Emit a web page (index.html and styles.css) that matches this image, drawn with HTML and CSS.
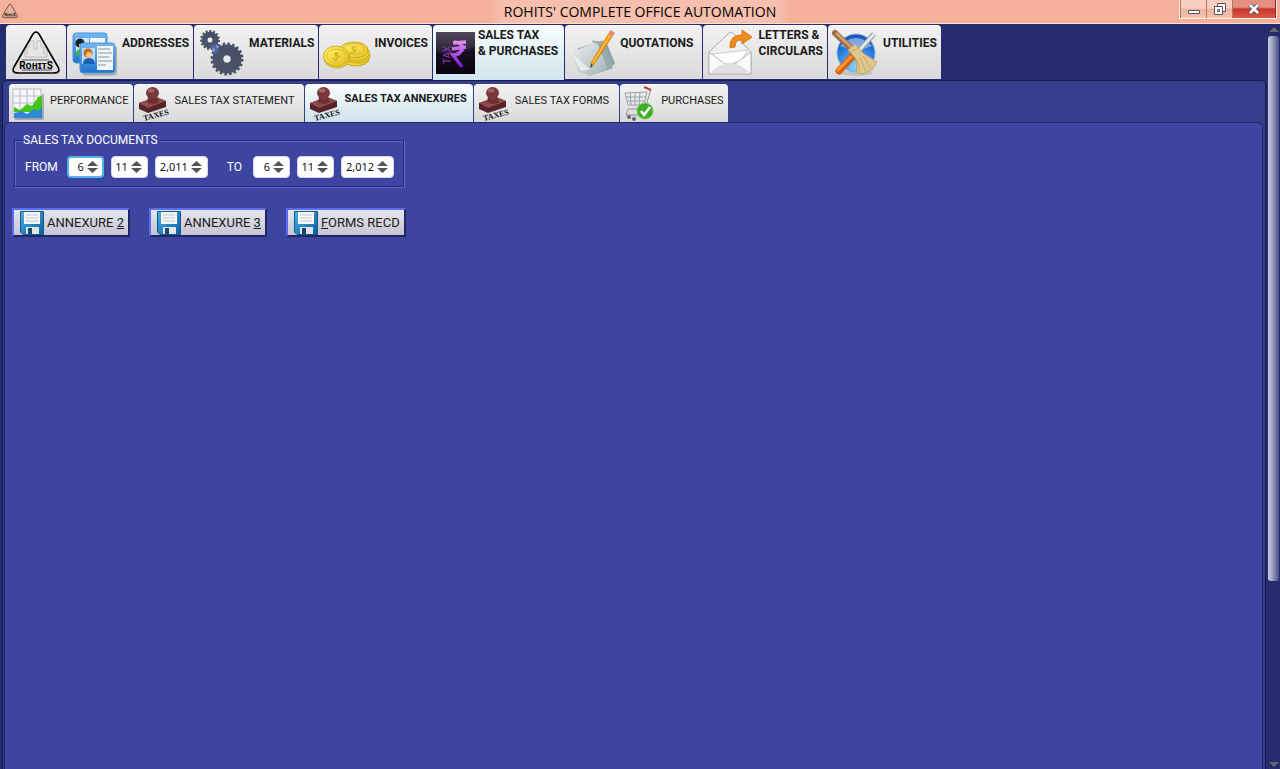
FILE: index.html
```html
<!DOCTYPE html>
<html lang="en">
<head>
<meta charset="utf-8">
<title>ROHITS' COMPLETE OFFICE AUTOMATION</title>
<link rel="stylesheet" href="styles.css">
</head>
<body>
<svg class="defs" aria-hidden="true">
  <defs>
    <linearGradient id="blue" x1="0" y1="0" x2="0" y2="1"><stop offset="0" stop-color="#75b8f3"/><stop offset="1" stop-color="#1f74cf"/></linearGradient>
    <linearGradient id="gold" x1="0" y1="0" x2="1" y2="1"><stop offset="0" stop-color="#fff06a"/><stop offset="1" stop-color="#e6c322"/></linearGradient>
    <linearGradient id="steel" x1="1" y1="0" x2="0" y2="1"><stop offset="0" stop-color="#475069"/><stop offset="1" stop-color="#4c5367"/></linearGradient>
    <linearGradient id="violet" x1="0" y1="0" x2="0" y2="1"><stop offset="0" stop-color="#e58af5"/><stop offset="1" stop-color="#7a10d8"/></linearGradient>
    <linearGradient id="night" x1="0" y1="0" x2="0" y2="1"><stop offset="0" stop-color="#4a4556"/><stop offset=".45" stop-color="#17101e"/><stop offset="1" stop-color="#08030c"/></linearGradient>
    <linearGradient id="sheet" x1="0" y1="0" x2="1" y2="1"><stop offset="0" stop-color="#eef1f1"/><stop offset="1" stop-color="#a3b4b7"/></linearGradient>
    <linearGradient id="floppy" x1="0" y1="0" x2="1" y2="1"><stop offset="0" stop-color="#46b4e4"/><stop offset="1" stop-color="#0c5c9d"/></linearGradient>
    <radialGradient id="globe" cx=".5" cy=".85" r=".85"><stop offset="0" stop-color="#8fd8ff"/><stop offset=".6" stop-color="#2d7fe0"/><stop offset="1" stop-color="#1750b4"/></radialGradient>
    <symbol id="logo" viewBox="0 0 48 44">
      <path d="M15 24V16h3V10h4v8h3V10h4v6h3v8M13 18v8h22v-8" fill="none" stroke="#bdbdbd"/>
      <path d="M21 3Q24-1 27 3L46 36Q49 42 42 42H6Q-1 42 2 36Z" fill="none" stroke="#000" stroke-width="1.600"/>
      <text x="24" y="38" text-anchor="middle" font-family="Roboto, sans-serif" font-size="10" font-weight="700">RᴏʜɪᴛS</text>
      <path d="M10 29h27M10 39h30" stroke="#333" stroke-width=".800"/>
    </symbol>
    <symbol id="stamp" viewBox="0 0 33 36">
      <path d="M2 17l17-6 10 4v6L11 27 2 23z" fill="#54242a"/>
      <path d="M2 17l17-6 10 4-18 7z" fill="#8f4b4c"/>
      <path d="M11 11h9l2 5q-6 4-12 0z" fill="#6b3034"/>
      <ellipse cx="15.500" cy="7" rx="6.500" ry="6" fill="#78383b"/>
      <ellipse cx="14" cy="4.500" rx="3.500" ry="2" fill="#a26464"/>
      <text x="7" y="35" transform="rotate(-15 7 35)" font-family="Liberation Serif, serif" font-size="8" font-weight="700" fill="#111">TAXES</text>
    </symbol>
    <symbol id="disk" viewBox="0 0 24 24">
      <path d="M.500.500h23v23H3l-2.500-2.500z" fill="url(#floppy)" stroke="#0b5a94"/>
      <path d="M4 1h16v12H4z" fill="#f5f7f8"/>
      <path d="M6 4h12M6 7h12M6 10h12" stroke="#c4c9cd"/>
      <path d="M6 16h13v7H6z" fill="#dfe7ea"/><path d="M8 17h4v6H8z" fill="#17466e"/>
    </symbol>
    <symbol id="arrows" viewBox="0 0 11 12"><path d="M5.500 0L11 5H0zM0 7h11l-5.500 5z" fill="#555"/></symbol>
  </defs>
</svg>

<div class="window">
  <header class="titlebar">
    <svg class="app-icon" aria-hidden="true"><use href="#logo"/></svg>
    <h1 class="title">ROHITS' COMPLETE OFFICE AUTOMATION</h1>
    <div class="controls">
      <button class="ctl ctl-min" aria-label="Minimize"><svg viewBox="0 0 14 14"><path d="M1.500 8.500h11v3h-11z" fill="#fff" stroke="#555"/></svg></button>
      <button class="ctl ctl-max" aria-label="Restore"><svg viewBox="0 0 14 14"><path d="M4.500 1.500h8v8h-8z" fill="#fff" stroke="#555"/><path d="M1.500 4.500h8v8h-8z" fill="#fff" stroke="#555"/><path d="M4.500 7.500h2v2h-2z" fill="none" stroke="#555"/></svg></button>
      <button class="ctl ctl-close" aria-label="Close"><svg viewBox="0 0 14 14"><path d="M3 3l8 8M11 3l-8 8" stroke="#555" stroke-width="4.500"/><path d="M3 3l8 8M11 3l-8 8" stroke="#fff" stroke-width="2.500"/></svg></button>
    </div>
  </header>

  <div class="workspace">
    <main class="main">
      <nav class="tabs" aria-label="Sections">
        <button class="tab tab-logo" aria-label="Rohits"><svg class="icon-logo" aria-hidden="true"><use href="#logo"/></svg></button>
        <button class="tab">
          <svg class="icon-main" viewBox="0 0 48 48" aria-hidden="true">
            <rect x="2" y="4" width="34" height="30" rx="3" fill="url(#blue)" stroke="#4d94d8"/>
            <path d="M5 9h13v17H5z" fill="#c9e4fb"/><path d="M19 9h15v5H19z" fill="#f3f5f7"/><circle cx="9" cy="14" r="4.500" fill="#172126"/><path d="M8 15h4v4H8z" fill="#f2ad68"/><path d="M4 26q1-6 8-7v7z" fill="#44b33e"/>
            <path d="M12 45.500h30q3 0 3-3V18" fill="none" stroke="#aaa" stroke-width="2"/>
            <rect x="9" y="14" width="35" height="30" rx="3" fill="url(#blue)" stroke="#4d94d8"/>
            <path d="M11 19h13v16H11z" fill="#b9dcf8"/><path d="M26 17h16v24H26z" fill="#f1f4f6"/>
            <path d="M27 20h12M27 24h14M27 28h11M27 32h14M27 36h8" stroke="#aeb4ba" stroke-width="1.500"/>
            <circle cx="17" cy="24" r="4.500" fill="#c6691c"/><circle cx="18" cy="26" r="3" fill="#f8c07d"/><path d="M12 35q0-6 6-6t6 6z" fill="#1b62b7"/>
          </svg>
          <span class="tab-label">ADDRESSES</span>
        </button>
        <button class="tab">
          <svg class="icon-main" viewBox="0 0 48 48" aria-hidden="true">
            <circle cx="12" cy="11" r="5.500" fill="none" stroke="url(#steel)" stroke-width="6"/>
            <circle cx="12" cy="11" r="9" fill="none" stroke="#4a5266" stroke-width="2" stroke-dasharray="2 1.770"/>
            <circle cx="29" cy="30" r="9" fill="none" stroke="url(#steel)" stroke-width="11"/>
            <circle cx="29" cy="30" r="15" fill="none" stroke="#4a5266" stroke-width="3" stroke-dasharray="2.500 2.210"/>
            <path d="M12 16l7-1 2 5-3 6-4-4z" fill="#526fc0" opacity=".6"/>
            <circle cx="29" cy="30" r="3.500" fill="#e8e8ea"/>
          </svg>
          <span class="tab-label">MATERIALS</span>
        </button>
        <button class="tab">
          <svg class="icon-main" viewBox="0 0 48 48" aria-hidden="true">
            <g fill="url(#gold)" stroke="#c09c12" stroke-width=".800">
              <ellipse cx="33" cy="30" rx="13" ry="7"/><ellipse cx="34" cy="27" rx="13" ry="7"/><ellipse cx="33" cy="24" rx="13.500" ry="8"/><ellipse cx="31" cy="21" rx="14" ry="8"/>
              <ellipse cx="14" cy="29" rx="13" ry="10"/><ellipse cx="13" cy="27" rx="12.500" ry="10"/>
            </g>
            <ellipse cx="31" cy="20" rx="11" ry="5.500" fill="none" stroke="#e0ba2a"/><ellipse cx="13" cy="27" rx="9.500" ry="7" fill="none" stroke="#e2bd2c"/>
            <path d="M16 25q-4-2-4 0t3 2-1 3-4-1M13 23v9M33 18q-4-1-4 1t3 2-1 2-4 0" fill="none" stroke="#cda31c"/>
          </svg>
          <span class="tab-label">INVOICES</span>
        </button>
        <button class="tab tab-current" aria-current="page">
          <svg class="icon-tax" viewBox="0 0 39 42" aria-hidden="true">
            <path d="M0 0h39v42H0z" fill="url(#night)"/><path d="M0 19Q18 27 39 14V0H0z" fill="#5a5264" opacity=".3"/>
            <path d="M17 11l13-1M16 17l14-2M18 10q10 1 8 8-3 5-9 5l9 12" fill="none" stroke="url(#violet)" stroke-width="3.500"/>
            <text x="15" y="32" transform="rotate(-90 15 32)" font-family="Roboto, sans-serif" font-size="10" fill="#8d35bf">TAX</text>
          </svg>
          <span class="tab-label">SALES TAX<br>&amp; PURCHASES</span>
        </button>
        <button class="tab tab-wide">
          <svg class="icon-main" viewBox="0 0 50 50" aria-hidden="true">
            <path d="M24 12l15 2 9 22-9 7z" fill="#8fa3a6"/><path d="M9 20l26-8 11 29-26 8z" fill="#98aaad"/>
            <path d="M1 25l28-12 11 28-18 8-12-5z" fill="url(#sheet)"/>
            <path d="M1 24l12 20 9-2z" fill="#edf0f0" opacity=".8"/><circle cx="29" cy="14" r="1.500" fill="#aaa"/>
            <path d="M41 5l4 3-19 29-3 3 0-5z" fill="#f49b17" stroke="#c9730a" stroke-width=".500"/><path d="M43 6L25 35" stroke="#ffd16a"/><path d="M41 5l2-4 5 3-3 4z" fill="#ed8871"/><path d="M23 36l2 2-3 3z" fill="#444"/>
          </svg>
          <span class="tab-label">QUOTATIONS</span>
        </button>
        <button class="tab">
          <svg class="icon-main" viewBox="0 0 48 48" aria-hidden="true">
            <path d="M2 23L22 4q2-2 4 0l18 19v22H2z" fill="#f0f0f0" stroke="#aaa"/>
            <path d="M5 25l36-4-8 12-22 3z" fill="#fff" stroke="#ccc"/>
            <path d="M2 23l16 12q5 2 10 0l16-12v22H2z" fill="#fbfbfb" stroke="#b5b5b5"/>
            <path d="M3 44q20-20 40 0z" fill="#e0e0e0"/>
            <path d="M23 19q-1-13 12-13V1l10 7-10 7v-4q-7-1-7 7z" fill="#f28a1d" stroke="#ce6c0b" stroke-width=".800"/>
          </svg>
          <span class="tab-label">LETTERS &amp;<br>CIRCULARS</span>
        </button>
        <button class="tab">
          <svg class="icon-main" viewBox="0 0 48 48" aria-hidden="true">
            <ellipse cx="25" cy="44" rx="16" ry="3" fill="#aaa" opacity=".5"/>
            <circle cx="24" cy="24" r="19" fill="url(#globe)" stroke="#8ab8e8"/><path d="M8 17q16-16 32 0-16 7-32 0z" fill="#fff" opacity=".4"/>
            <path d="M42 5L22 27" stroke="#8f9aa3" stroke-width="5"/><path d="M42 5L22 27" stroke="#e5e9ec" stroke-width="3"/>
            <path d="M20 28L7 42" stroke="#d9600f" stroke-width="7" stroke-linecap="round"/><path d="M19 28L6 41" stroke="#ff9431" stroke-width="3" stroke-linecap="round"/>
            <path d="M3 4L20 20" stroke="#9c6d45" stroke-width="6" stroke-linecap="round"/><path d="M4 4L20 19" stroke="#ce9f70" stroke-width="3"/>
            <path d="M16 21l7-6 8 9 14 9-5 8-10 4-5-1-1-14z" fill="#dfc78d" stroke="#b99b5d" stroke-width=".800"/><path d="M16 24l12-6M25 30l3 13M28 28l6 15M31 27l8 13" stroke="#bb9d62" stroke-width=".800"/>
          </svg>
          <span class="tab-label">UTILITIES</span>
        </button>
      </nav>

      <section class="panel">
        <nav class="subtabs" aria-label="Sales tax and purchases">
          <button class="subtab subtab-tight">
            <svg class="icon-sub" viewBox="0 0 33 36" aria-hidden="true"><path d="M1 3h28v29H1z" fill="#f8f8fb" stroke="#b8b8c4"/><path d="M8 3v20M15 3v20M22 3v20M1 10h28M1 17h28" stroke="#b8b8cb"/><path d="M3 33h28V8" fill="none" stroke="#777"/><path d="M2 21l6 3 7-6 5 2 6-9 4-1v16H2z" fill="#43c51b"/><path d="M2 27l8-2 5 3 7-5 4 2 4-4v11H2z" fill="#2f87d8"/></svg>
            <span class="subtab-label">PERFORMANCE</span>
          </button>
          <button class="subtab subtab-wide"><svg class="icon-sub" aria-hidden="true"><use href="#stamp"/></svg><span class="subtab-label">SALES TAX STATEMENT</span></button>
          <button class="subtab subtab-current" aria-current="page"><svg class="icon-sub" aria-hidden="true"><use href="#stamp"/></svg><span class="subtab-label">SALES TAX ANNEXURES</span></button>
          <button class="subtab subtab-wide"><svg class="icon-sub" aria-hidden="true"><use href="#stamp"/></svg><span class="subtab-label">SALES TAX FORMS</span></button>
          <button class="subtab subtab-tight">
            <svg class="icon-sub" viewBox="0 0 33 36" aria-hidden="true"><path d="M2 7l22-1-3 13H5zM7 7l1 12M12 7v12M17 7l-1 12M3 11h20M4 15h18" fill="none" stroke="#9aa1a8"/><path d="M28 3l-6 20H5l-2 6h12" fill="none" stroke="#8d939a"/><path d="M21 1l7 3" stroke="#c83b3b" stroke-width="2"/><circle cx="6" cy="31" r="2" fill="#666"/><circle cx="11" cy="33" r="2" fill="#666"/><circle cx="22" cy="25" r="8" fill="#3fae26" stroke="#75cf54"/><path d="M18 25l3 4 6-8" fill="none" stroke="#fff" stroke-width="2.500"/></svg>
            <span class="subtab-label">PURCHASES</span>
          </button>
        </nav>

        <div class="content">
          <fieldset class="documents">
            <legend>SALES TAX DOCUMENTS</legend>
            <div class="range">
              <span class="range-label range-from">FROM</span>
              <span class="spinner spinner-focus"><input type="text" inputmode="numeric" aria-label="From day" value="6"><svg aria-hidden="true"><use href="#arrows"/></svg></span>
              <span class="spinner"><input type="text" inputmode="numeric" aria-label="From month" value="11"><svg aria-hidden="true"><use href="#arrows"/></svg></span>
              <span class="spinner spinner-year"><input type="text" inputmode="numeric" aria-label="From year" value="2,011"><svg aria-hidden="true"><use href="#arrows"/></svg></span>
              <span class="range-label range-to">TO</span>
              <span class="spinner"><input type="text" inputmode="numeric" aria-label="To day" value="6"><svg aria-hidden="true"><use href="#arrows"/></svg></span>
              <span class="spinner"><input type="text" inputmode="numeric" aria-label="To month" value="11"><svg aria-hidden="true"><use href="#arrows"/></svg></span>
              <span class="spinner spinner-year"><input type="text" inputmode="numeric" aria-label="To year" value="2,012"><svg aria-hidden="true"><use href="#arrows"/></svg></span>
            </div>
          </fieldset>
          <div class="actions">
            <button class="action"><svg aria-hidden="true"><use href="#disk"/></svg><span>ANNEXURE <u>2</u></span></button>
            <button class="action"><svg aria-hidden="true"><use href="#disk"/></svg><span>ANNEXURE <u>3</u></span></button>
            <button class="action"><svg aria-hidden="true"><use href="#disk"/></svg><span><u>F</u>ORMS RECD</span></button>
          </div>
        </div>
      </section>
    </main>
    <div class="scrollbar" aria-hidden="true">
      <span class="arrow arrow-up"></span>
      <div class="track"><div class="thumb"></div></div>
      <span class="arrow arrow-down"></span>
    </div>
  </div>
</div>
</body>
</html>
```

FILE: styles.css
```css
* { box-sizing: border-box; }

body {
  margin: 0;
  font-family: Roboto, "Liberation Sans", sans-serif;
  color: #1a1a1a;
}

button {
  margin: 0;
  font: inherit;
  color: inherit;
}

.defs {
  position: absolute;
  width: 0;
  height: 0;
}

.window {
  display: flex;
  flex-direction: column;
  min-height: 100vh;
  background: #262d6f;
}

/* Title bar */
.titlebar {
  display: grid;
  grid-template-columns: 1fr auto 1fr;
  height: 24px;
  background: #f4b09a;
  border-bottom: 1px solid #fbe0d6;
}

.app-icon {
  width: 16px;
  height: 16px;
  margin: 3px 2px;
}

.title {
  margin: 0;
  padding: 0 16px;
  font: 400 14px/23px "Open Sans", "Noto Sans", sans-serif;
  color: #000;
  background: linear-gradient(90deg, #f4b09a, #f7c0ae 16px, #f7c0ae calc(100% - 16px), #f4b09a);
}

.controls {
  display: flex;
  justify-self: end;
  height: 19px;
  margin-right: 3px;
  border: 1px solid #fdeee8;
  border-top: 0;
}

.ctl {
  display: flex;
  align-items: center;
  justify-content: center;
  width: 26px;
  padding: 0;
  border: 0;
  border-left: 1px solid #a87868;
  background: linear-gradient(#f9cfc1 45%, #f0b19d 50%, #f6c2b0);
}

.ctl svg {
  width: 14px;
  height: 14px;
}

.ctl-close {
  width: 44px;
  border-right: 1px solid #8b2a22;
  background: linear-gradient(#e58f82 40%, #c9352a 50%, #d8584a);
}

.workspace {
  display: flex;
  flex: 1;
}

.main {
  display: flex;
  flex: 1;
  flex-direction: column;
  min-width: 0;
  padding: 1px 0 0 2px;
}

/* Section tabs */
.tabs {
  display: flex;
  gap: 1px;
  padding-left: 4px;
}

.tab {
  display: flex;
  align-items: center;
  gap: 3px;
  height: 54px;
  padding: 0 4px;
  border: 0;
  border-top: 1px solid #fff;
  border-radius: 4px 4px 0 0;
  background: linear-gradient(#f2f2f2, #d9d9d9);
  text-align: left;
}

.tab-logo {
  padding: 0 6px;
}

.tab-wide {
  padding-right: 9px;
}

.tab-current {
  height: 55px;
  padding: 0 6px 0 3px;
  background: linear-gradient(#f8fdff, #d2e5ee);
}

.icon-main {
  flex: none;
  width: 48px;
  height: 48px;
}

.icon-logo {
  width: 48px;
  height: 44px;
}

.icon-tax {
  flex: none;
  width: 39px;
  height: 42px;
}

.tab-label {
  padding-bottom: 20px;
  font-size: 12px;
  font-weight: 700;
  line-height: 16px;
  white-space: nowrap;
}

/* Nested panels */
.panel {
  display: flex;
  flex: 1;
  flex-direction: column;
  padding: 3px 2px 0 1px;
  border: 1px solid #171c4e;
  border-bottom: 0;
  border-radius: 5px 5px 0 0;
  background: #353d8d;
}

.subtabs {
  display: flex;
  gap: 1px;
  padding-left: 5px;
}

.subtab {
  display: flex;
  align-items: center;
  gap: 5px;
  height: 38px;
  padding: 0 6px 0 3px;
  border: 0;
  border-top: 1px solid #fff;
  border-radius: 4px 4px 0 0;
  background: linear-gradient(#f2f2f2, #d9d9d9);
}

.subtab-tight {
  padding-right: 4px;
}

.subtab-wide {
  padding-right: 10px;
}

.subtab-current {
  gap: 3px;
  padding-right: 6px;
  background: linear-gradient(#f8fdff, #cfe2ec);
}

.icon-sub {
  flex: none;
  width: 33px;
  height: 36px;
}

.subtab-label {
  padding-bottom: 6px;
  font-size: 11px;
  line-height: 16px;
  white-space: nowrap;
}

.subtab-current .subtab-label {
  padding-bottom: 10px;
  font-weight: 700;
}

.content {
  flex: 1;
  padding: 10px 8px;
  border: 1px solid #20265f;
  border-bottom: 0;
  border-radius: 5px 5px 0 0;
  background: #3d45a1;
}

/* Date range */
.documents {
  width: fit-content;
  min-width: 0;
  margin: 0 0 21px 1px;
  padding: 9px 9px 8px 10px;
  border: 1px solid #262c72;
  box-shadow: 1px 1px 0 #5866e0, inset 1px 1px 0 #5866e0;
  color: #fff;
}

.documents legend {
  margin-left: -4px;
  padding: 0 2px;
  background: #3d45a1;
  font-size: 12px;
  line-height: 14px;
}

.range {
  display: flex;
  align-items: center;
  gap: 7px;
}

.range-label {
  font-size: 12px;
  line-height: 16px;
}

.range-from {
  margin-right: 2px;
}

.range-to {
  margin: 0 4px 0 12px;
}

.spinner {
  display: flex;
  align-items: center;
  gap: 3px;
  width: 37px;
  height: 22px;
  padding: 0 5px 0 3px;
  border: 1px solid #d5d5e6;
  border-radius: 4px;
  background: #fff;
}

.spinner-year {
  width: 53px;
}

.spinner-focus {
  border: 2px solid #4fb6ea;
  padding: 0 4px 0 2px;
}

.spinner input {
  flex: 1;
  width: 0;
  min-width: 0;
  padding: 0;
  border: 0;
  outline: 0;
  background: none;
  font: 11px/16px "Noto Sans", "Open Sans", sans-serif;
  color: #111;
  text-align: right;
}

.spinner svg {
  flex: none;
  width: 11px;
  height: 12px;
}

/* Export buttons */
.actions {
  display: flex;
  gap: 19px;
  margin-left: -1px;
}

.action {
  display: flex;
  align-items: center;
  gap: 3px;
  height: 29px;
  padding: 0 4px 0 6px;
  border: 2px solid;
  border-color: #5a6cf2 #22285f #22285f #5a6cf2;
  background: linear-gradient(#e6e6ee, #c4c4d4);
  font-size: 13px;
  line-height: 16px;
}

.action svg {
  flex: none;
  width: 24px;
  height: 24px;
}

/* Scroll bar */
.scrollbar {
  display: flex;
  flex-direction: column;
  align-items: center;
  width: 14px;
  padding: 3px 1px 2px 2px;
  background: #252c6b;
}

.track {
  flex: 1;
  width: 100%;
  padding-top: 4px;
}

.thumb {
  height: 75%;
  border-radius: 3px;
  background: linear-gradient(90deg, #c9cce0, #9da1c4 40%, #454d85);
}

.arrow {
  border: 5px solid transparent;
}

.arrow-up {
  border-top: 0;
  border-bottom-color: #666;
}

.arrow-down {
  border-bottom: 0;
  border-top-color: #666;
}
```
